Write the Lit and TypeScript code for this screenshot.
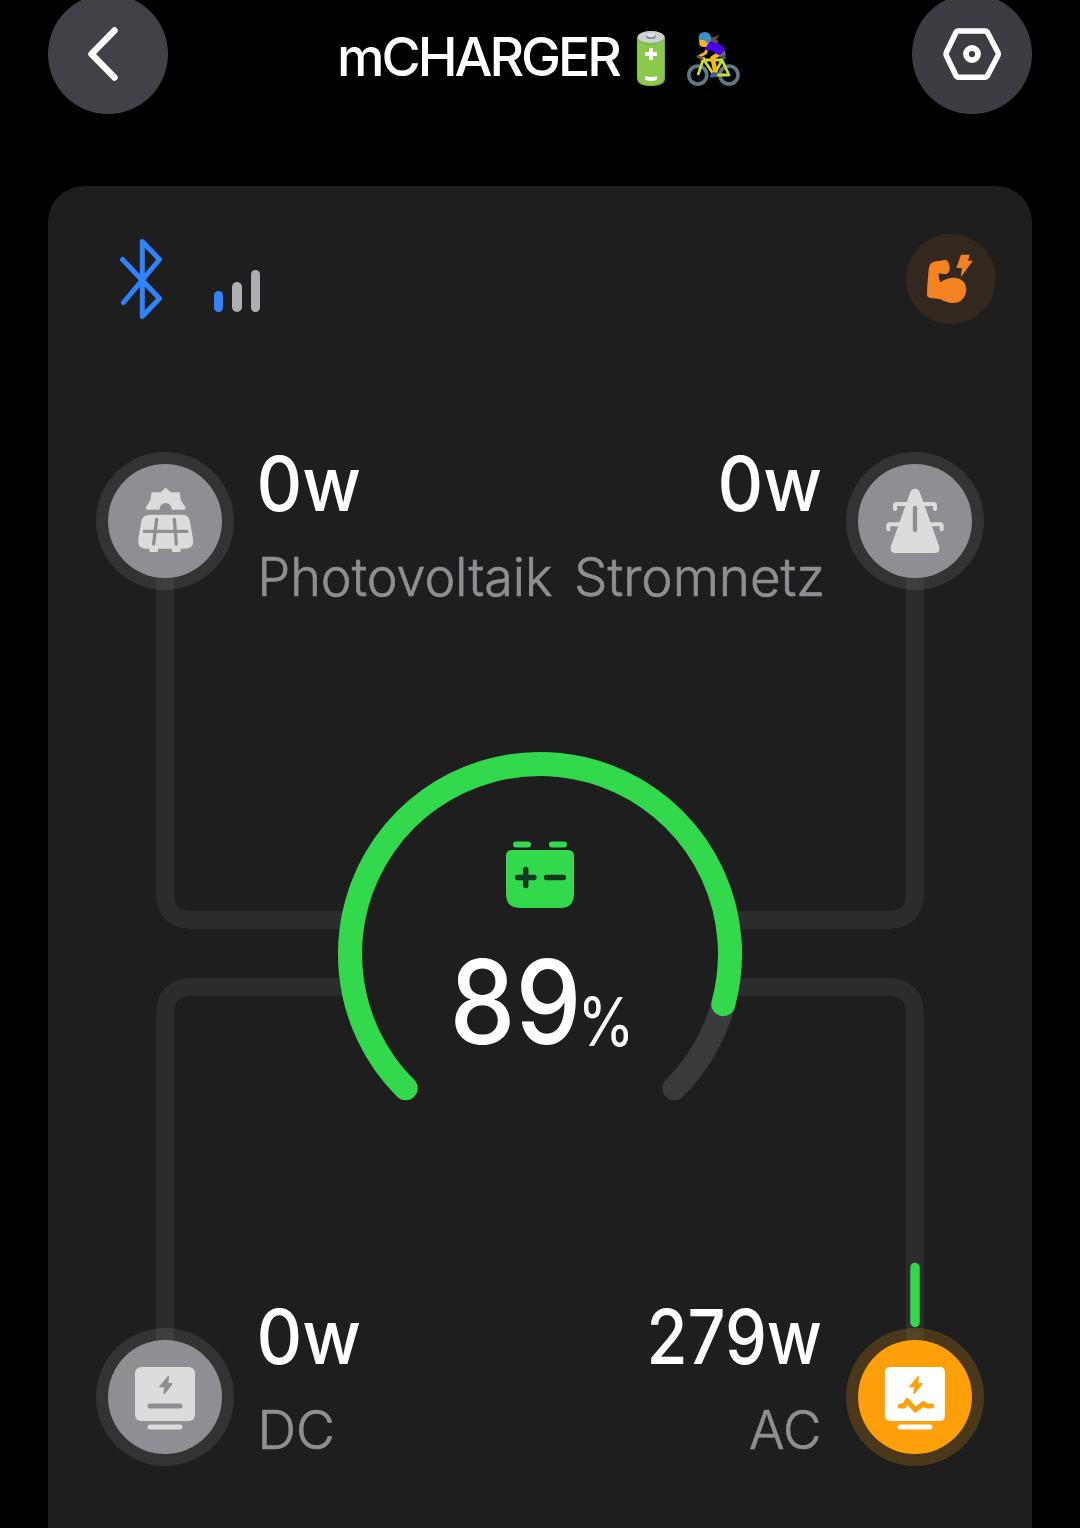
import { LitElement, html, svg, css } from "lit";
import { customElement, property } from "lit/decorators.js";

type IconName = "solar" | "pylon" | "dc" | "ac";

interface Label {
  text: string;
  /** left edge of the first advance inside the metric box */
  x: number;
  /** total advance of the run */
  length: number;
}

interface Metric {
  icon: IconName;
  side: "left" | "right";
  width: number;
  value: Label;
  name: Label;
  active?: boolean;
}

const TOP: Metric[] = [
  {
    icon: "solar", side: "left", width: 294,
    value: { text: "0w", x: -1.5, length: 104.5 },
    name: { text: "Photovoltaik", x: -0.5, length: 295 },
  },
  {
    icon: "pylon", side: "right", width: 248,
    value: { text: "0w", x: 143.5, length: 104.5 },
    name: { text: "Stromnetz", x: 0, length: 251 },
  },
];

const BOTTOM: Metric[] = [
  {
    icon: "dc", side: "left", width: 294,
    value: { text: "0w", x: -1.5, length: 104.5 },
    name: { text: "DC", x: -0.5, length: 77.5 },
  },
  {
    icon: "ac", side: "right", width: 248, active: true,
    value: { text: "279w", x: 72.5, length: 175.5 },
    name: { text: "AC", x: 175, length: 72.5 },
  },
];

const BOLT = "M234 258 L207 290 Q206 292 209 292 L223 292 L220 309 Q221 313 225 311 L247 283 Q248 279 245 279 L235 279 L237 261 Q237 256 234 258Z";

const ICONS = {
  solar: svg`
    <path fill="#dcdcdc" stroke="#dcdcdc" stroke-width="6" stroke-linejoin="round"
      d="M187 145H213L227 132L241 145H267L269 166L283 187V191H248A21 20 0 0 0 206 191H171V187L184 167Z"/>
    <path fill="#dcdcdc" d="M180 209H274Q296 209 299 226L309 282Q313 311 284 311H272V317Q272 321 268 321H250Q246 321 246 317V311H204V317Q204 321 200 321H182Q178 321 178 317V311H170Q141 311 145 282L154 228Q158 209 180 209Z"/>
    <path fill="none" stroke="#8e8e93" stroke-width="10" stroke-linecap="round"
      d="M163 259H291M200 223L191 297M253 223L259 297"/>`,
  pylon: svg`
    <path fill="#dcdcdc" d="M211 141Q215 131 225 131T239 141L297 303Q302 324 284 324H166Q148 324 153 303Z"/>
    <path fill="none" stroke="#dcdcdc" stroke-width="12" stroke-linecap="round" stroke-linejoin="round"
      d="M165 192V182Q165 177 170 177H280Q285 177 285 182V192M145 253V243Q145 238 150 238H300Q305 238 305 243V253"/>
    <path stroke="#8e8e93" stroke-width="13" stroke-linecap="round" d="M225 189V255"/>`,
  dc: svg`
    <g transform="translate(0 -93)">
      <rect x="135" y="231" width="180" height="162" rx="18" fill="#dcdcdc"/>
      <path d=${BOLT} fill="#8e8e93"/>
      <path stroke="#8e8e93" stroke-width="15" stroke-linecap="round" d="M180 348H270"/>
      <path stroke="#dcdcdc" stroke-width="15" stroke-linecap="round" d="M180 411H270"/>
    </g>`,
  ac: svg`
    <g transform="translate(0 -93)">
      <rect x="135" y="231" width="180" height="162" rx="15" fill="#fff"/>
      <path d=${BOLT} fill="#ff9f0a"/>
      <path fill="none" stroke="#ff9f0a" stroke-width="15" stroke-linecap="round" stroke-linejoin="round"
        d="M181 348H192L202 332L226 360L250 341L260 348H275"/>
      <path stroke="#fff" stroke-width="15" stroke-linecap="round" d="M180 411H270"/>
    </g>`,
};

@customElement("metric-node")
class MetricNode extends LitElement {
  @property({ attribute: false }) metric!: Metric;

  static styles = css`
    :host { display: block; }
    .node { display: flex; gap: 24px; }
    .node.right { flex-direction: row-reverse; }
    .halo {
      flex: none; width: 138px; height: 138px; border-radius: 50%;
      background: rgba(142, 142, 142, 0.19);
    }
    .halo.active { background: rgba(255, 159, 10, 0.2); }
    .disc { fill: #8e8e93; }
    .active .disc { fill: #ff9f0a; }
    .halo svg { display: block; width: 138px; height: 138px; }
    .texts { display: flex; flex-direction: column; }
    .line { display: block; overflow: visible; font-family: Inter, "Liberation Sans", sans-serif; }
    .value { font-size: 76px; font-weight: 500; fill: #fff; }
    .name { font-size: 53px; font-weight: 300; fill: #8e8e93; stroke: #8e8e93; stroke-width: 0.7px; }
    .bottom .halo { align-self: flex-end; }
    .bottom .texts { padding-bottom: 5px; }
  `;

  render() {
    const m = this.metric;
    const low = m.icon === "dc" || m.icon === "ac";
    return html`
      <div class="node ${m.side} ${low ? "bottom" : ""}">
        <div class="halo ${m.active ? "active" : ""}">
          <svg viewBox="18 21 414 414">
            <circle class="disc" cx="225" cy="228" r="171"/>
            ${ICONS[m.icon]}
          </svg>
        </div>
        <div class="texts">
          <svg class="line" width=${m.width} height="80">
            <text class="value" x=${m.value.x} y="59" textLength=${m.value.length} lengthAdjust="spacingAndGlyphs">${m.value.text}</text>
          </svg>
          <svg class="line" width=${m.width} height="76">
            <text class="name" x=${m.name.x} y="64" textLength=${m.name.length} lengthAdjust="spacingAndGlyphs">${m.name.text}</text>
          </svg>
        </div>
      </div>`;
  }
}

@customElement("charge-gauge")
class ChargeGauge extends LitElement {
  @property({ type: Number }) level = 0;

  static styles = css`
    :host { display: block; width: 404px; height: 352px; }
    svg { display: block; overflow: visible; font-family: Inter, "Liberation Sans", sans-serif; }
    .arc { fill: none; stroke-width: 24; stroke-linecap: round; }
    .track { stroke: #3a3a3c; }
    .fill { stroke: #32d94d; }
    .num { font-size: 116px; font-weight: 500; fill: #fff; }
    .pct { font-size: 68px; font-weight: 400; fill: #fff; }
  `;

  private arc(fraction: number) {
    const point = (deg: number) => {
      const a = (deg * Math.PI) / 180;
      return `${(202 + 190 * Math.cos(a)).toFixed(2)} ${(202 + 190 * Math.sin(a)).toFixed(2)}`;
    };
    const sweep = 270 * fraction;
    return `M${point(135)}A190 190 0 ${sweep > 180 ? 1 : 0} 1 ${point(135 + sweep)}`;
  }

  render() {
    return html`
      <svg width="404" height="352" viewBox="0 0 404 352">
        <path class="arc track" d=${this.arc(1)}/>
        <path class="arc fill" d=${this.arc(this.level / 100)}/>
        <g fill="#32d94d">
          <rect x="175" y="89.500" width="18" height="6" rx="3"/>
          <rect x="211" y="89.500" width="18" height="6" rx="3"/>
          <path d="M174 98H230Q236 98 236 104V142Q236 156 222 156H182Q168 156 168 142V104Q168 98 174 98Z"/>
        </g>
        <path stroke="#15391c" stroke-width="5.300" stroke-linecap="round" d="M179.500 125.500H196M187.800 117.500V133.500M208.500 125.500H225.500"/>
        <text class="num" x="111.500" y="292" textLength="132" lengthAdjust="spacingAndGlyphs">${this.level}</text>
        <text class="pct" x="239.500" y="293.500" textLength="57" lengthAdjust="spacingAndGlyphs">%</text>
      </svg>`;
  }
}

@customElement("app-root")
class AppRoot extends LitElement {
  static styles = css`
    :host { display: block; }
    * { box-sizing: border-box; }
    svg { display: block; }
    .screen {
      width: 1080px; height: 1528px; overflow: hidden; background: #000;
      display: flex; flex-direction: column;
      font-family: Inter, "Liberation Sans", sans-serif;
    }
    .bar {
      flex: none; height: 120px; margin-top: -6px; padding: 0 48px;
      display: flex; justify-content: space-between; align-items: center;
    }
    .round {
      width: 120px; height: 120px; padding: 0; border: 0; border-radius: 50%;
      background: #404247;
    }
    .round.dim { background: #3b3d42; }
    .heading { display: flex; align-items: center; width: 404px; }
    .title { overflow: visible; font-size: 53.5px; font-weight: 500; fill: #fff; }
    .battery { margin: 10px 0 0 14px; }
    .rider { margin: 10px 0 0 21px; }
    .card {
      position: relative; flex: none; width: 984px; height: 1400px; margin: 72px 48px 0;
      padding-top: 48px; border-radius: 36px 36px 0 0; background: #1e1e1e;
      display: flex; flex-direction: column;
    }
    .pipes { position: absolute; left: 0; top: 0; }
    .status {
      height: 90px; padding: 0 36px 0 71px;
      display: flex; align-items: center; justify-content: space-between;
    }
    .links { display: flex; align-items: flex-end; gap: 51px; }
    .signal { display: flex; align-items: flex-end; gap: 9px; padding-bottom: 8px; }
    .tick { width: 9.300px; border-radius: 5px; background: #aeaeb2; }
    .tick.on { height: 21px; background: #2e84ff; }
    .tick.mid { height: 30px; }
    .tick.tall { height: 42px; }
    .boost { width: 90px; height: 90px; border-radius: 50%; background: #33281f; }
    .row { position: relative; display: flex; justify-content: space-between; padding: 0 48px; }
    .sources { margin-top: 128px; height: 156px; }
    .gauge { position: relative; align-self: center; margin-top: 144px; }
    .loads { margin-top: 201px; height: 161px; }
  `;

  private battery() {
    return html`
      <svg class="battery" width="30" height="58" viewBox="0 0 30 58">
        <path fill="#7cb342" d="M1 8V48Q1 56 15 56T29 48V8Z"/>
        <path fill="#8bc94a" d="M1.500 8V46Q1.500 55 14.500 55T28 46V8Z"/>
        <ellipse cx="15" cy="8" rx="14" ry="7" fill="#86b957"/>
        <ellipse cx="15" cy="7" rx="13" ry="6" fill="#cfd1d2"/>
        <ellipse cx="15" cy="6.500" rx="5" ry="2.600" fill="#8b9093"/>
        <ellipse cx="15" cy="5" rx="4" ry="2" fill="#dfe1e2"/>
        <path stroke="#fff" stroke-width="4" d="M15 18V30M9 24H21"/>
        <path fill="#fff" d="M9 46Q15 48 21 46V49.500Q15 52.500 9 49.500Z"/>
      </svg>`;
  }

  private rider() {
    return html`
      <svg class="rider" width="54" height="58" viewBox="0 0 54 58">
        <g fill="none" stroke="#5f7886" stroke-width="3.600">
          <circle cx="10.800" cy="45" r="9"/><circle cx="42" cy="45" r="9"/>
        </g>
        <path fill="#6d4a42" d="M22 7Q28 8 32 4.500Q31.500 8 28.500 9Q31.500 9.500 31 13.500Q25 13 22 11Z"/>
        <path fill="#68737a" d="M33 17Q39 19 38.500 26Q33 28 27 26Z"/>
        <path fill="#3f5058" d="M32 29L36 25Q41 26 38 30Z"/>
        <path fill="none" stroke="#c6dc32" stroke-width="2.800" stroke-linejoin="round"
          d="M11 45L17 27M16 30H34M17 30L27 45L35 30L42 45H28"/>
        <path fill="none" stroke="#ffb61c" stroke-width="4.500" stroke-linecap="round" stroke-linejoin="round" d="M30 25L25.500 28L28.500 42"/>
        <path fill="none" stroke="#ffb61c" stroke-width="3" stroke-linecap="round" stroke-linejoin="round" d="M21 17L18.500 23L13 26"/>
        <path fill="none" stroke="#765347" stroke-width="2.800" stroke-linecap="round" d="M11 26.500L15 28.500"/>
        <path fill="#ffb61c" d="M12 9Q17 8 22 9Q23 14 20 16.500Q15 18 12.500 15Z"/>
        <path fill="#4a00e8" d="M20 16Q21 12 26 12Q35 14 38 19Q36 24.500 31 25L23.500 19.500L21.500 21.500L18 19.500Z"/>
        <path fill="#398fc6" d="M11.500 9.500Q11 2 18 2Q25 2.500 24 11L21.500 13.500Q18.500 13 18.500 10.500Q15 10 11.500 9.500Z"/>
        <path fill="#3e64a0" d="M26 42L31 43Q30 48 26 47.500H23Q23 44 26 42Z"/>
      </svg>`;
  }

  render() {
    return html`
      <div class="screen">
        <header class="bar">
          <button class="round" aria-label="Back">
            <svg width="120" height="120" viewBox="0 0 120 120">
              <path fill="none" stroke="#fff" stroke-width="6.500" stroke-linecap="round" stroke-linejoin="round" d="M66.500 36.500L43.500 60L66.500 83.500"/>
            </svg>
          </button>
          <div class="heading">
            <svg class="title" width="284" height="60">
              <text x="-1" y="52" textLength="285">mCHARGER</text>
            </svg>
            ${this.battery()} ${this.rider()}
          </div>
          <button class="round dim" aria-label="Settings">
            <svg width="120" height="120" viewBox="0 0 120 120" fill="none" stroke="#fff">
              <path stroke-width="5.500" stroke-linejoin="round" d="M46 37H73.500Q74.500 37 75.300 38L86 58.500Q86.800 60 86 61.500L75.300 82Q74.500 83.200 73.500 83.200H46Q45 83.200 44.200 82L34.300 61.500Q33.500 60 34.300 58.500L44.200 38Q45 37 46 37Z"/>
              <circle cx="60" cy="60" r="6" stroke-width="5.800"/>
            </svg>
          </button>
        </header>

        <main class="card">
          <svg class="pipes" width="984" height="1342" viewBox="48 186 984 1342" fill="none">
            <g stroke="#2c2c2e" stroke-width="18">
              <path d="M165 560V893Q165 920 192 920H350"/>
              <path d="M915 560V893Q915 920 888 920H730"/>
              <path d="M165 1360V1014Q165 987 192 987H350"/>
              <path d="M915 1360V1014Q915 987 888 987H730"/>
            </g>
            <path stroke="#32d74b" stroke-width="9.500" stroke-linecap="round" d="M915 1267.500V1322.500"/>
          </svg>

          <div class="status">
            <div class="links">
              <svg width="44" height="82" viewBox="0 0 44 82">
                <path fill="none" stroke="#2e84ff" stroke-width="5" stroke-linecap="round" stroke-linejoin="round"
                  d="M3.500 21.500L40.500 60.500L23.300 78.500V3.500L40.500 21.500L4.500 64.500" />
              </svg>
              <div class="signal">
                <div class="tick on"></div><div class="tick mid"></div><div class="tick tall"></div>
              </div>
            </div>
            <div class="boost">
              <svg width="90" height="90" viewBox="30 27 270 270" fill="#f58220">
                <path d="M120 109Q134 107 146 104Q154 104 158 113Q164 126 160 137Q157 147 146 147Q136 147 128 145Q127 158 133 172Q150 157 178 158Q209 163 211 193Q210 215 195 227Q182 236 162 233Q144 230 131 222Q116 220 103 219Q93 218 93 208Q93 180 97 146Q98 126 103 117Q108 111 120 109Z"/>
                <path d="M195 89H221L216 107H231L194 157L198 129H181Z"/>
              </svg>
            </div>
          </div>

          <section class="row sources">
            ${TOP.map((m) => html`<metric-node .metric=${m}></metric-node>`)}
          </section>
          <charge-gauge class="gauge" level="89"></charge-gauge>
          <section class="row loads">
            ${BOTTOM.map((m) => html`<metric-node .metric=${m}></metric-node>`)}
          </section>
        </main>
      </div>`;
  }
}
